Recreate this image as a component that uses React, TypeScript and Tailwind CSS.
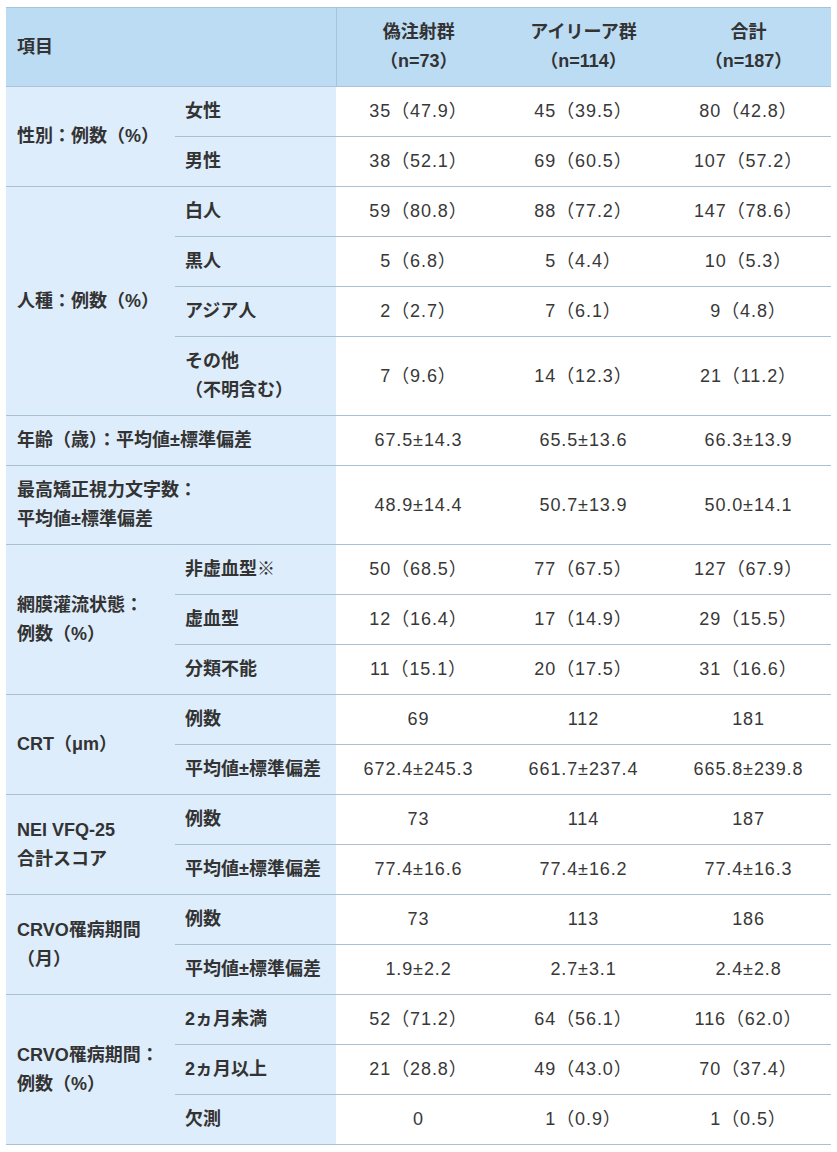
import React from "react";

type Sub = { label: React.ReactNode; v: [string, string, string] };
type Group = { label: React.ReactNode; subs?: Sub[]; v?: [string, string, string] };

const groups: Group[] = [
  {
    label: "性別：例数（%）",
    subs: [
      { label: "女性", v: ["35（47.9）", "45（39.5）", "80（42.8）"] },
      { label: "男性", v: ["38（52.1）", "69（60.5）", "107（57.2）"] },
    ],
  },
  {
    label: "人種：例数（%）",
    subs: [
      { label: "白人", v: ["59（80.8）", "88（77.2）", "147（78.6）"] },
      { label: "黒人", v: ["5（6.8）", "5（4.4）", "10（5.3）"] },
      { label: "アジア人", v: ["2（2.7）", "7（6.1）", "9（4.8）"] },
      {
        label: (
          <>
            その他
            <br />
            （不明含む）
          </>
        ),
        v: ["7（9.6）", "14（12.3）", "21（11.2）"],
      },
    ],
  },
  { label: "年齢（歳）：平均値±標準偏差", v: ["67.5±14.3", "65.5±13.6", "66.3±13.9"] },
  {
    label: (
      <>
        最高矯正視力文字数：
        <br />
        平均値±標準偏差
      </>
    ),
    v: ["48.9±14.4", "50.7±13.9", "50.0±14.1"],
  },
  {
    label: (
      <>
        網膜灌流状態：
        <br />
        例数（%）
      </>
    ),
    subs: [
      { label: "非虚血型※", v: ["50（68.5）", "77（67.5）", "127（67.9）"] },
      { label: "虚血型", v: ["12（16.4）", "17（14.9）", "29（15.5）"] },
      { label: "分類不能", v: ["11（15.1）", "20（17.5）", "31（16.6）"] },
    ],
  },
  {
    label: "CRT（μm）",
    subs: [
      { label: "例数", v: ["69", "112", "181"] },
      { label: "平均値±標準偏差", v: ["672.4±245.3", "661.7±237.4", "665.8±239.8"] },
    ],
  },
  {
    label: (
      <>
        NEI VFQ-25
        <br />
        合計スコア
      </>
    ),
    subs: [
      { label: "例数", v: ["73", "114", "187"] },
      { label: "平均値±標準偏差", v: ["77.4±16.6", "77.4±16.2", "77.4±16.3"] },
    ],
  },
  {
    label: (
      <>
        CRVO罹病期間
        <br />
        （月）
      </>
    ),
    subs: [
      { label: "例数", v: ["73", "113", "186"] },
      { label: "平均値±標準偏差", v: ["1.9±2.2", "2.7±3.1", "2.4±2.8"] },
    ],
  },
  {
    label: (
      <>
        CRVO罹病期間：
        <br />
        例数（%）
      </>
    ),
    subs: [
      { label: "2ヵ月未満", v: ["52（71.2）", "64（56.1）", "116（62.0）"] },
      { label: "2ヵ月以上", v: ["21（28.8）", "49（43.0）", "70（37.4）"] },
      { label: "欠測", v: ["0", "1（0.9）", "1（0.5）"] },
    ],
  },
];

const labelCell =
  "bg-[#deedfb] border-b border-[#a9c1d4] font-bold text-left align-middle";
const dataCell =
  "bg-white border-b border-[#a9c1d4] text-center align-middle font-normal tracking-[0.05em] text-[#383838] py-[10px]";

export default function App() {
  return (
    <div
      className="bg-white w-[837px] min-h-[1152px] pt-[7px] pl-[6px]"
      style={{ fontFamily: '"Liberation Sans", "Noto Sans CJK JP", sans-serif' }}
    >
      <table className="table-fixed border-collapse w-[825px] text-[18px] leading-[29px] text-[#333]">
        <colgroup>
          <col className="w-[169px]" />
          <col className="w-[161px]" />
          <col className="w-[165px]" />
          <col className="w-[165px]" />
          <col className="w-[165px]" />
        </colgroup>
        <thead>
          <tr className="bg-[#bcdcf3]">
            <th
              colSpan={2}
              className="border-t border-b border-r border-[#a9c4da] text-left font-bold pl-[11px] py-[10px] align-middle"
            >
              項目
            </th>
            <th className="border-t border-b border-[#a9c4da] text-center font-bold py-[10px]">
              偽注射群
              <br />
              （n=73）
            </th>
            <th className="border-t border-b border-[#a9c4da] text-center font-bold py-[10px]">
              アイリーア群
              <br />
              （n=114）
            </th>
            <th className="border-t border-b border-[#a9c4da] text-center font-bold py-[10px]">
              合計
              <br />
              （n=187）
            </th>
          </tr>
        </thead>
        <tbody>
          {groups.map((g, gi) =>
            g.subs ? (
              g.subs.map((s, si) => (
                <tr key={`${gi}-${si}`}>
                  {si === 0 && (
                    <td rowSpan={g.subs!.length} className={`${labelCell} pl-[11px] py-[10px]`}>
                      {g.label}
                    </td>
                  )}
                  <td className={`${labelCell} pl-[10px] py-[10px]`}>{s.label}</td>
                  {s.v.map((v, vi) => (
                    <td key={vi} className={dataCell}>
                      {v}
                    </td>
                  ))}
                </tr>
              ))
            ) : (
              <tr key={gi}>
                <td colSpan={2} className={`${labelCell} pl-[11px] py-[10px]`}>
                  {g.label}
                </td>
                {g.v!.map((v, vi) => (
                  <td key={vi} className={dataCell}>
                    {v}
                  </td>
                ))}
              </tr>
            )
          )}
        </tbody>
      </table>
    </div>
  );
}
